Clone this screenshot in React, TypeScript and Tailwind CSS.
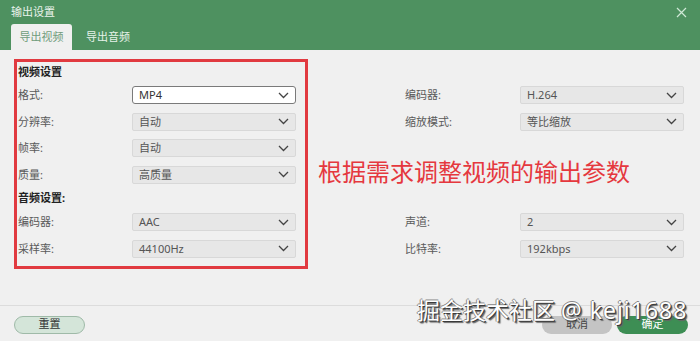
import React from 'react';

const font = 'font-["Noto_Sans","Noto_Sans_CJK_SC",sans-serif]';

interface SelectProps {
  value: string;
  active?: boolean;
}

const Chevron: React.FC = () => (
  <svg width="11" height="7" viewBox="0 0 11 7" fill="none">
    <path d="M1 1l4.5 4.5L10 1" stroke="#444" strokeWidth="1.3" />
  </svg>
);

const Select: React.FC<SelectProps> = ({ value, active }) => (
  <div
    className={
      active
        ? 'w-[164px] h-[18px] rounded-[3px] border border-[#7a7a7a] bg-white flex items-center justify-between pl-[6px] pr-[6px] text-[11px] text-[#333]'
        : 'w-[164px] h-[18px] rounded-[2px] border border-[#d8d8d8] bg-[#e7e7e7] flex items-center justify-between pl-[6px] pr-[6px] text-[11px] text-[#555]'
    }
  >
    <span>{value}</span>
    <Chevron />
  </div>
);

const Row: React.FC<{ label: string; value: string; active?: boolean }> = ({ label, value, active }) => (
  <div className="h-[26.5px] flex items-center">
    <span className="w-[114px] text-[11px] text-[#5a5a5a]">{label}</span>
    <Select value={value} active={active} />
  </div>
);

const RightRow: React.FC<{ label: string; value: string }> = ({ label, value }) => (
  <div className="h-[26.5px] flex items-center pl-[87px]">
    <span className="w-[115px] text-[11px] text-[#5a5a5a]">{label}</span>
    <Select value={value} />
  </div>
);

export default function App() {
  return (
    <div className={`w-[700px] h-[341px] bg-[#f0f0f0] relative overflow-hidden ${font}`}>
      <header className="h-[50px] bg-[#4e9160]">
        <div className="h-[24px] flex items-center justify-between pl-[11px] pr-[13px]">
          <span className="text-[11px] text-[#eaf3ec]">输出设置</span>
          <svg width="11" height="11" viewBox="0 0 11 11" fill="none">
            <path d="M1 1l9 9M10 1l-9 9" stroke="#cfe9d6" strokeWidth="1.2" />
          </svg>
        </div>
        <div className="h-[26px] flex items-end pl-[11px]">
          <div className="w-[61px] h-[26px] bg-[#f0f0f0] rounded-t-[3px] flex items-center justify-center text-[11px] text-[#6f9c7b]">
            导出视频
          </div>
          <div className="ml-[14px] h-[26px] flex items-center text-[11px] text-[#e6f1e9]">导出音频</div>
        </div>
      </header>

      <main className="h-[255px] flex pt-[9px]">
        <div className="ml-[14px] w-[294px] h-[210px] border-[3px] border-[#e13a40] flex flex-col pl-[1px] pr-[9px]">
          <div className="h-[20px] flex items-center text-[11px] font-bold text-[#222]">视频设置</div>
          <Row label="格式:" value="MP4" active />
          <Row label="分辨率:" value="自动" />
          <Row label="帧率:" value="自动" />
          <Row label="质量:" value="高质量" />
          <div className="h-[21px] flex items-center text-[11px] font-bold text-[#222]">音频设置:</div>
          <Row label="编码器:" value="AAC" />
          <Row label="采样率:" value="44100Hz" />
        </div>

        <div className="ml-[10px] w-[366px] flex flex-col">
          <div className="h-[23px]" />
          <RightRow label="编码器:" value="H.264" />
          <RightRow label="缩放模式:" value="等比缩放" />
          <div className="h-[74px] flex items-center text-[24px] leading-none text-[#e5383e]">
            根据需求调整视频的输出参数
          </div>
          <RightRow label="声道:" value="2" />
          <RightRow label="比特率:" value="192kbps" />
        </div>
      </main>

      <footer className="h-[36px] border-t border-[#dcdcdc] flex items-center justify-between pl-[14px] pr-[12px] pt-[2px]">
        <button className="w-[71px] h-[18px] rounded-full border border-[#9fbaa8] bg-[#d4e5d9] text-[11px] text-[#333] flex items-center justify-center">
          重置
        </button>
        <div className="flex gap-[5px]">
          <button className="w-[70px] h-[18px] rounded-full bg-[#c4c4c4] text-[11px] text-[#444] flex items-center justify-center">
            取消
          </button>
          <button className="w-[71px] h-[18px] rounded-full bg-[#3d8e54] text-[11px] text-white flex items-center justify-center">
            确定
          </button>
        </div>
      </footer>

      <div className="absolute left-[417px] top-[299px] text-[23px] leading-none text-white whitespace-nowrap [text-shadow:1px_1px_0_#3a3a3a,-1px_0_0_#888,0_-1px_0_#888,2px_2px_1px_#666]">
        掘金技术社区 <span className="tracking-[1px]">@ keji1688</span>
      </div>
    </div>
  );
}
